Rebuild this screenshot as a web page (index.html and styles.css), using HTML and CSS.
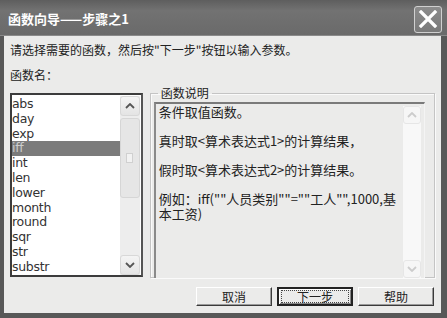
FILE: index.html
```html
<html>
<head>
<meta charset="utf-8">
<link rel="stylesheet" href="styles.css">
</head>
<body>
<div class="window">
    <div class="titlebar">
        <span class="title">函数向导——步骤之1</span>
        <div class="close">
            <svg width="20" height="18" viewBox="0 0 20 18"><path d="M3 2 L17 16 M17 2 L3 16" stroke="#fff" stroke-width="3.2" stroke-linecap="square"/></svg>
        </div>
    </div>
    <div class="client">
        <div class="prompt">请选择需要的函数，然后按"下一步"按钮以输入参数。</div>
        <div class="caption">函数名：</div>
        <div class="main">
            <div class="listbox">
                <ul class="items">
                    <li>abs</li>
                    <li>day</li>
                    <li>exp</li>
                    <li class="selected">iff</li>
                    <li>int</li>
                    <li>len</li>
                    <li>lower</li>
                    <li>month</li>
                    <li>round</li>
                    <li>sqr</li>
                    <li>str</li>
                    <li>substr</li>
                </ul>
                <div class="vscroll">
                    <div class="sbtn"><svg width="10" height="6" viewBox="0 0 10 6"><path d="M1 5 L5 1 L9 5" fill="none" stroke="#555" stroke-width="1.8"/></svg></div>
                    <div class="track"><div class="thumb"><span class="grip"></span></div></div>
                    <div class="sbtn"><svg width="10" height="6" viewBox="0 0 10 6"><path d="M1 1 L5 5 L9 1" fill="none" stroke="#555" stroke-width="1.8"/></svg></div>
                </div>
            </div>
            <fieldset class="group">
                <legend>函数说明</legend>
                <div class="memo">
                    <div class="memo-text">
                        <p>条件取值函数。</p>
                        <p>真时取&lt;算术表达式1&gt;的计算结果，</p>
                        <p>假时取&lt;算术表达式2&gt;的计算结果。</p>
                        <p>例如：iff(""人员类别""=""工人"",1000,基本工资)</p>
                    </div>
                    <div class="vscroll light">
                        <div class="sbtn"><svg width="10" height="6" viewBox="0 0 10 6"><path d="M1 5 L5 1 L9 5" fill="none" stroke="#ccc" stroke-width="1.8"/></svg></div>
                        <div class="track"></div>
                        <div class="sbtn"><svg width="10" height="6" viewBox="0 0 10 6"><path d="M1 1 L5 5 L9 1" fill="none" stroke="#ccc" stroke-width="1.8"/></svg></div>
                    </div>
                </div>
            </fieldset>
        </div>
        <div class="buttons">
            <button class="btn">取消</button>
            <button class="btn default"><span class="focus">下一步</span></button>
            <button class="btn">帮助</button>
        </div>
    </div>
</div>
</body>
</html>
```
FILE: styles.css
```css
html, body
{
    margin: 0;
    padding: 0;
    background: #5c5c5c;
}

body
{
    font-family: "Noto Sans CJK SC", "DejaVu Sans", sans-serif;
    font-size: 12px;
    color: #222;
}

.window
{
    width: 447px;
    height: 318px;
    display: flex;
    flex-direction: column;
    background: #585858;
    box-sizing: border-box;
    padding: 0 6px 5px 4px;
}

.titlebar
{
    height: 36px;
    margin: 0 -6px 0 -4px;
    padding: 0 6px 0 8px;
    display: flex;
    align-items: center;
    justify-content: space-between;
    background: linear-gradient(#5e5e5e, #727272 30%, #6a6a6a);
    border-bottom: 1px solid #8a8a8a;
    box-sizing: border-box;
}

.title
{
    color: #fff;
    font-weight: bold;
    font-size: 13px;
    padding-top: 2px;
}

.close
{
    width: 26px;
    height: 25px;
    border: 1px solid #d0d0d0;
    border-radius: 3px;
    background: linear-gradient(#8c8c8c, #7a7a7a);
    display: flex;
    align-items: center;
    justify-content: center;
    margin-top: 3px;
    margin-right: -1px;
}

.client
{
    flex: 1;
    background: #ebebea;
    padding: 6px 6px 0 6px;
    display: flex;
    flex-direction: column;
}

.prompt
{
    line-height: 16px;
}

.caption
{
    margin-top: 9px;
    line-height: 16px;
}

.main
{
    display: flex;
    margin-top: 10px;
    height: 186px;
}

.listbox
{
    width: 133px;
    height: 184px;
    box-sizing: border-box;
    border: 2px solid #3c3c3c;
    border-right-color: #555;
    background: #fff;
    display: flex;
}

.items
{
    list-style: none;
    margin: 2px 0 0 0;
    padding: 0;
    flex: 1;
    font-family: "DejaVu Sans", sans-serif;
    font-size: 12.5px;
    color: #333;
}

.items li
{
    height: 14.8px;
    line-height: 14.8px;
    padding-left: 0;
    letter-spacing: -0.3px;
}

.items li.selected
{
    background: #7b7b7b;
    color: #ccc;
}

.vscroll
{
    width: 20px;
    margin: 1px 1px 0 0;
    display: flex;
    flex-direction: column;
    background: #ededed;
}

.sbtn
{
    height: 20px;
    box-sizing: border-box;
    border: 1px solid #d8d8d8;
    border-radius: 3px;
    background: linear-gradient(#f4f4f4, #e4e4e4);
    display: flex;
    align-items: center;
    justify-content: center;
}

.track
{
    flex: 1;
    padding: 2px 0;
}

.thumb
{
    height: 78px;
    border: 1px solid #d6d6d6;
    border-radius: 3px;
    background: #e6e6e6;
    display: flex;
    align-items: center;
    justify-content: center;
}

.grip
{
    width: 5px;
    height: 8px;
    border: 1px solid #d0d0d0;
    background: #f2f2f2;
}

.group
{
    margin: -7px 0 0 7px;
    padding: 1px 9px 0 3px;
    width: 286px;
    height: 192px;
    box-sizing: border-box;
    border: 1px solid #c4c4c4;
    box-shadow: inset 1px 1px 0 #fafafa, 1px 1px 0 #fafafa;
    display: flex;
}

.group legend
{
    margin-left: 4px;
    padding: 0 3px;
    line-height: 14px;
    color: #222;
}

.memo
{
    flex: 1;
    height: 174px;
    margin-top: 1px;
    border-top: 2px solid #7a7a7a;
    border-left: 2px solid #8a8a8a;
    border-right: 1px solid #f4f4f4;
    display: flex;
    background: #ebebea;
}

.memo-text
{
    flex: 1;
    padding: 1px 0 0 3px;
    font-size: 13px;
    line-height: 14.5px;
}

.memo-text p
{
    margin: 0 0 14.5px 0;
}

.vscroll.light
{
    width: 18px;
    margin: 2px 3px 0 0;
    background: #f8f8f8;
}

.vscroll.light .sbtn
{
    height: 18px;
    border-color: #e6e6e6;
    background: #f6f6f6;
}

.buttons
{
    display: flex;
    justify-content: flex-end;
    gap: 5px;
    margin-top: 8px;
    padding-right: 1px;
}

.btn
{
    width: 76px;
    height: 19px;
    padding: 0;
    font-family: "Noto Sans CJK SC", sans-serif;
    font-size: 12px;
    line-height: 15px;
    color: #222;
    background: #ebebea;
    border: 1px solid;
    border-color: #fff #3a3a3a #3a3a3a #fff;
    box-shadow: inset -1px -1px 0 #9a9a9a;
}

.btn.default
{
    border: 2px solid #222;
    box-shadow: inset 1px 1px 0 #fff, inset -1px -1px 0 #888;
    padding: 1px 2px;
}

.focus
{
    display: block;
    height: 100%;
    box-sizing: border-box;
    border: 1px dotted #444;
    line-height: 11px;
}
```
